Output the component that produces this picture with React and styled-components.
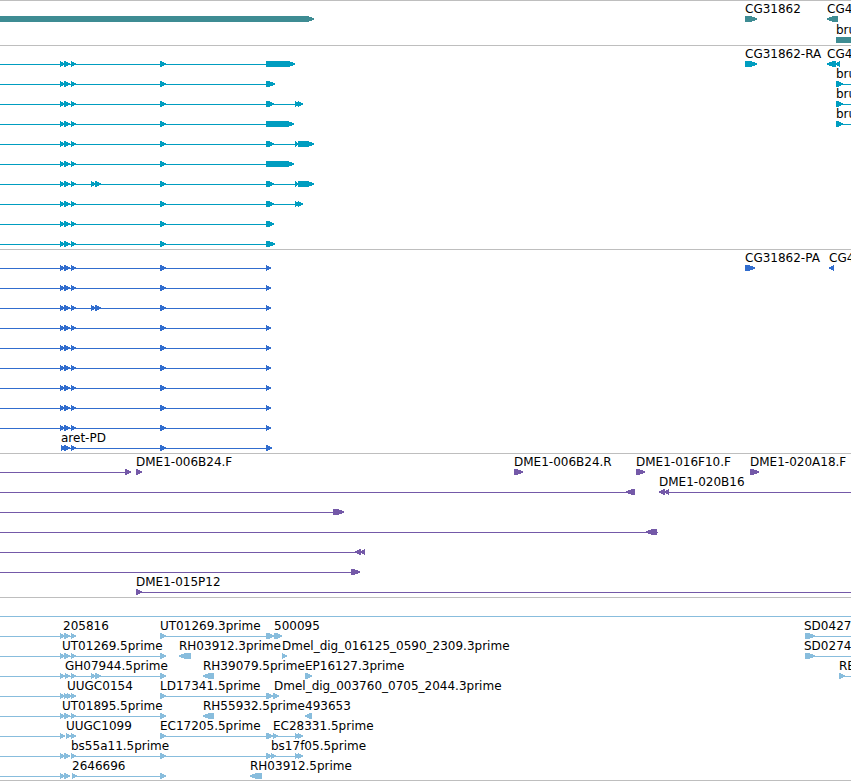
import React from "react";
import styled, { createGlobalStyle } from "styled-components";

const GlobalStyle = createGlobalStyle`
  body {
    margin: 0;
    background: #ffffff;
  }
`;

const Browser = styled.main`
  width: 100%;
  overflow: hidden;
  border-bottom: 1px solid #bebebe;
  background: #ffffff;
  color: #000000;
  font-family: "DejaVu Sans", sans-serif;
  font-size: 12px;
  line-height: 14px;
`;

const Track = styled.section`
  display: flex;
  flex-direction: column;
  gap: ${(p) => p.$gap}px;
  padding: 1px 0 ${(p) => p.$bottom}px;
  border-top: 1px solid #bebebe;
  color: ${(p) => p.$color};
`;

const Row = styled.div`
  display: flex;
  flex-direction: column;
`;

const LabelLane = styled.div`
  position: relative;
  height: 14px;
`;

const Label = styled.span`
  position: absolute;
  top: 0;
  left: ${(p) => p.$x}px;
  color: #000000;
  white-space: nowrap;
`;

const Glyphs = styled.svg`
  display: block;
  width: 100%;
  height: 6px;
  fill: currentColor;
  shape-rendering: crispEdges;
`;

/* Exons are [start, end]; when start > end the exon points left. */
function Exon({ from, to }) {
  const dir = to > from ? 1 : -1;
  const length = Math.abs(to - from);
  const neck = to - dir * Math.min(length, length > 8 ? 6 : 5);
  return (
    <polygon
      points={`${from},0 ${neck},0 ${to},2.5 ${to},3.5 ${neck},6 ${from},6`}
    />
  );
}

function TrackRow({ labels = [], lines = [], exons = [], bars = [] }) {
  return (
    <Row>
      <LabelLane>
        {labels.map(([x, text]) => (
          <Label key={x} $x={x}>
            {text}
          </Label>
        ))}
      </LabelLane>
      <Glyphs aria-hidden="true">
        {lines.map(([a, b]) => (
          <rect key={a} x={a} y="3" width={b ? b - a : "100%"} height="1" />
        ))}
        {bars.map((a) => (
          <rect key={a} x={a} y="0" width="100%" height="6" />
        ))}
        {exons.map(([a, b]) => (
          <React.Fragment key={`${a}-${b}`}>
            <rect x={a > b ? a - 1 : a} y="0" width="1" height="6" />
            <Exon from={a} to={b} />
          </React.Fragment>
        ))}
      </Glyphs>
    </Row>
  );
}

const start = [[60, 65], [64, 70], [71, 76]];
const body = [...start, [160, 166]];
const extra = [[91, 96], [95, 101]];
const pair = [[295, 300], [298, 303]];
const tail = [[295, 299], [298, 314]];

const genes = [
  {
    labels: [[745, "CG31862"], [827, "CG4"]],
    exons: [[0, 314], [745, 757], [838, 827]],
  },
  { labels: [[836, "bru"]], bars: [836] },
];

const transcripts = [
  {
    labels: [[745, "CG31862-RA"], [827, "CG4"]],
    lines: [[0, 266]],
    exons: [...body, [266, 295], [745, 757], [836, 827], [840, 835]],
  },
  {
    labels: [[836, "bru"]],
    lines: [[0, 266], [836]],
    exons: [...body, [266, 275], [836, 843]],
  },
  {
    labels: [[836, "bru"]],
    lines: [[0, 303], [836]],
    exons: [...body, [266, 274], ...pair, [836, 843]],
  },
  {
    labels: [[836, "bru"]],
    lines: [[0, 266], [836]],
    exons: [...body, [266, 294], [836, 843]],
  },
  { lines: [[0, 298]], exons: [...body, [266, 274], ...tail] },
  { lines: [[0, 266]], exons: [...body, [266, 294]] },
  { lines: [[0, 298]], exons: [...body, ...extra, [266, 274], ...tail] },
  { lines: [[0, 303]], exons: [...body, [266, 274], ...pair] },
  { lines: [[0, 266]], exons: [...body, [266, 274]] },
  { lines: [[0, 266]], exons: [...body, [266, 275]] },
];

const plainProtein = { lines: [[0, 271]], exons: [...body, [266, 271]] };

const proteins = [
  {
    labels: [[745, "CG31862-PA"], [829, "CG4"]],
    lines: [[0, 271]],
    exons: [...body, [266, 271], [745, 755], [834, 829]],
  },
  plainProtein,
  { lines: [[0, 271]], exons: [...body, ...extra, [266, 271]] },
  plainProtein,
  plainProtein,
  plainProtein,
  plainProtein,
  plainProtein,
  plainProtein,
  {
    labels: [[61, "aret-PD"]],
    lines: [[61, 272]],
    exons: [[61, 66], [64, 70], [71, 76], [160, 166], [266, 272]],
  },
];

const clones = [
  {
    labels: [
      [136, "DME1-006B24.F"],
      [514, "DME1-006B24.R"],
      [636, "DME1-016F10.F"],
      [750, "DME1-020A18.F"],
    ],
    lines: [[0, 130]],
    exons: [[125, 131], [136, 142], [514, 523], [636, 645], [750, 759]],
  },
  {
    labels: [[659, "DME1-020B16"]],
    lines: [[0, 635], [659]],
    exons: [[635, 626], [665, 659], [669, 664]],
  },
  { lines: [[0, 344]], exons: [[333, 344]] },
  { lines: [[0, 658]], exons: [[657, 646]] },
  { lines: [[0, 365]], exons: [[361, 355], [365, 360]] },
  { lines: [[0, 360]], exons: [[351, 360]] },
  { labels: [[136, "DME1-015P12"]], lines: [[136]], exons: [[136, 142]] },
];

const cdnas = [
  { lines: [[0]] },
  {
    labels: [
      [63, "205816"],
      [160, "UT01269.3prime"],
      [274, "500095"],
      [804, "SD0427"],
    ],
    lines: [[0, 76], [160, 282], [805]],
    exons: [...body, [266, 274], [274, 282], [805, 815]],
  },
  {
    labels: [
      [62, "UT01269.5prime"],
      [179, "RH03912.3prime"],
      [282, "Dmel_dig_016125_0590_2309.3prime"],
      [804, "SD0274"],
    ],
    lines: [[0, 165], [805]],
    exons: [...body, [191, 179], [282, 287], [805, 815]],
  },
  {
    labels: [
      [65, "GH07944.5prime"],
      [203, "RH39079.5prime"],
      [305, "EP16127.3prime"],
      [839, "RE"],
    ],
    lines: [[0, 165], [839]],
    exons: [[60, 65], [65, 70], [71, 76], ...extra, [160, 166], [214, 203], [305, 312], [839, 845]],
  },
  {
    labels: [
      [67, "UUGC0154"],
      [160, "LD17341.5prime"],
      [274, "Dmel_dig_003760_0705_2044.3prime"],
    ],
    lines: [[0, 76], [160, 279]],
    exons: [[60, 65], [64, 69], [67, 72], [71, 76], [160, 166], [266, 273], [273, 279]],
  },
  {
    labels: [
      [62, "UT01895.5prime"],
      [203, "RH55932.5prime"],
      [305, "493653"],
    ],
    lines: [[0, 165]],
    exons: [...body, [214, 203], [312, 305]],
  },
  {
    labels: [
      [66, "UUGC1099"],
      [160, "EC17205.5prime"],
      [273, "EC28331.5prime"],
    ],
    lines: [[0, 65], [160, 303]],
    exons: [[60, 65], [66, 71], [71, 76], [160, 166], [266, 273], [273, 278], ...pair],
  },
  {
    labels: [[71, "bs55a11.5prime"], [271, "bs17f05.5prime"]],
    lines: [[0, 70], [71, 303]],
    exons: [...body, [266, 272], [271, 276], ...pair],
  },
  {
    labels: [[72, "2646696"], [250, "RH03912.5prime"]],
    lines: [[0, 70], [72, 165]],
    exons: [[60, 65], [64, 70], [72, 77], [160, 166], [262, 250]],
  },
];

const tracks = [
  { id: "genes", color: "#3e8c93", gap: 1, bottom: 2, rows: genes },
  { id: "transcripts", color: "#009dc0", gap: 0, bottom: 2, rows: transcripts },
  { id: "proteins", color: "#316dce", gap: 0, bottom: 2, rows: proteins },
  { id: "clones", color: "#7459a8", gap: 0, bottom: 2, rows: clones },
  { id: "cdnas", color: "#88bddd", gap: 0, bottom: 1, rows: cdnas },
];

export default function App() {
  return (
    <>
      <GlobalStyle />
      <Browser>
        {tracks.map((track) => (
          <Track
            key={track.id}
            $color={track.color}
            $gap={track.gap}
            $bottom={track.bottom}
          >
            {track.rows.map((row, i) => (
              <TrackRow key={i} {...row} />
            ))}
          </Track>
        ))}
      </Browser>
    </>
  );
}
